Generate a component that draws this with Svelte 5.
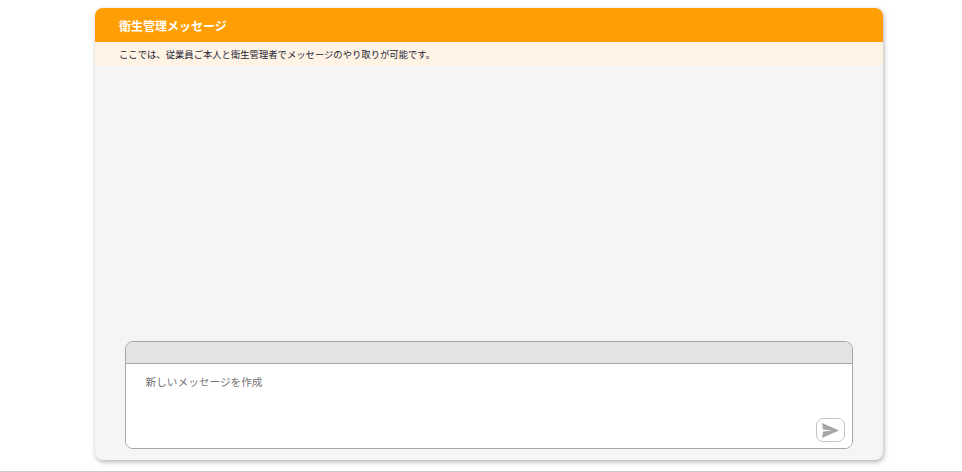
<script>
	let message = $state('');
</script>

<div class="page">
	<section class="card">
		<header class="title">衛生管理メッセージ</header>
		<p class="note">ここでは、従業員ご本人と衛生管理者でメッセージのやり取りが可能です。</p>
		<div class="thread"></div>
		<div class="compose">
			<div class="compose-head"></div>
			<div class="compose-body">
				<textarea bind:value={message} placeholder="新しいメッセージを作成"></textarea>
				<button class="send" type="button" aria-label="送信">
					<svg width="17" height="15" viewBox="0 0 17 15">
						<path d="M0 0 L17 7.5 L0 15 L1 8.6 L10 7.5 L1 6.4 Z" fill="#a6a6a6" />
					</svg>
				</button>
			</div>
		</div>
	</section>
</div>

<style>
	:global(body) {
		margin: 0;
		background: #fff;
	}

	.page {
		height: 472px;
		box-sizing: border-box;
		padding: 8px 0 0 16px;
		border-bottom: 1px solid #c9ced3;
		font-family: "Noto Sans CJK JP", "Liberation Sans", sans-serif;
	}

	.card {
		width: 788px;
		height: 452px;
		margin: 0 auto;
		display: flex;
		flex-direction: column;
		background: #f5f5f5;
		border-radius: 8px;
		box-shadow: 1px 2px 5px rgba(0, 0, 0, 0.3);
		overflow: hidden;
	}

	.title {
		height: 34px;
		line-height: 35px;
		padding-left: 24px;
		background: #ff9f05;
		color: #fff;
		font-size: 12px;
		font-weight: 700;
	}

	.note {
		height: 24px;
		line-height: 25px;
		margin: 0;
		padding-left: 24px;
		background: #fff3e6;
		color: #1a2230;
		font-size: 9.33px;
	}

	.thread {
		flex: 1;
	}

	.compose {
		margin: 0 30px 11px;
		height: 108px;
		box-sizing: border-box;
		display: flex;
		flex-direction: column;
		border: 1px solid #a6a6a6;
		border-radius: 8px;
		overflow: hidden;
	}

	.compose-head {
		height: 21px;
		background: #e4e4e4;
		border-bottom: 1px solid #a6a6a6;
	}

	.compose-body {
		flex: 1;
		position: relative;
		background: #fff;
	}

	textarea {
		display: block;
		width: 100%;
		height: 100%;
		box-sizing: border-box;
		padding: 9px 20px 9px 19.5px;
		border: none;
		outline: none;
		resize: none;
		background: transparent;
		font-family: inherit;
		font-size: 10.67px;
		line-height: 18px;
		color: #333;
	}

	textarea::placeholder {
		color: #757575;
		opacity: 1;
	}

	.send {
		position: absolute;
		right: 7px;
		bottom: 6px;
		width: 29px;
		height: 24px;
		padding: 0;
		display: flex;
		align-items: center;
		justify-content: center;
		background: #fff;
		border: 1px solid #c4c4c4;
		border-radius: 7px;
	}
</style>
